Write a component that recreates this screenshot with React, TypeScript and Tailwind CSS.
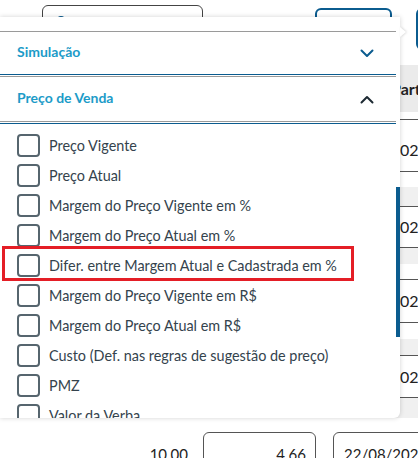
import React from 'react';

const items = [
  'Preço Vigente',
  'Preço Atual',
  'Margem do Preço Vigente em %',
  'Margem do Preço Atual em %',
  'Difer. entre Margem Atual e Cadastrada em %',
  'Margem do Preço Vigente em R$',
  'Margem do Preço Atual em R$',
  'Custo (Def. nas regras de sugestão de preço)',
  'PMZ',
  'Valor da Verba',
];

const ChevronDown = () => (
  <svg width="14" height="9" viewBox="0 0 14 9" fill="none">
    <path d="M1.5 1.5 L7 7 L12.5 1.5" stroke="#0b5c8f" strokeWidth="2" strokeLinecap="round" strokeLinejoin="round" />
  </svg>
);

const ChevronUp = () => (
  <svg width="14" height="9" viewBox="0 0 14 9" fill="none">
    <path d="M1.5 7.5 L7 2 L12.5 7.5" stroke="#1d2a33" strokeWidth="2" strokeLinecap="round" strokeLinejoin="round" />
  </svg>
);

const DateCell = ({ h, text }: { h: string; text: string }) => (
  <div className={`${h} flex items-center border-b border-[#555] pl-[400px] text-[16px] text-[#222] whitespace-nowrap`}>{text}</div>
);

export default function App() {
  return (
    <div className="relative w-[418px] h-[458px] overflow-hidden bg-white font-['Lato','Noto_Sans',sans-serif]">
      {/* --- BACKGROUND PAGE --- */}
      <div className="flex flex-col">
        <div className="h-[65px] flex items-start">
          <div className="shrink-0 ml-[42px] mt-[5px] w-[161px] h-[48px] border border-[#444] rounded-md pl-[14px] pt-[10px]">
            <div className="w-[8px] h-[8px] rounded-full bg-[#0b5c8f]" />
          </div>
          <div className="shrink-0 ml-[112px] mt-[8px] w-[77px] h-[44px] border-2 border-[#0b5c8f] rounded-md" />
          <div className="shrink-0 ml-[24px] mt-[8px] w-[30px] h-[42px] border-2 border-[#0b5c8f] rounded-md" />
        </div>
        <div className="h-[47px] bg-[#ebebeb] flex items-center pl-[391px] text-[16px] font-bold text-[#222] whitespace-nowrap">Partida</div>
        <div className="h-[8px] border-b border-[#555]" />
        <DateCell h="h-[52px] pt-[8px]" text="02/09/2022" />
        <div className="h-[35px] flex flex-col border-b border-[#555]">
          <div className="h-[15px]" />
          <div className="flex-1 bg-[#f0f0f0]" />
        </div>
        <DateCell h="h-[41px]" text="02/09/2022" />
        <div className="h-[32px] flex flex-col border-b border-[#555]">
          <div className="h-[16px] bg-[#f0f0f0]" />
          <div className="flex-1" />
        </div>
        <DateCell h="h-[43px]" text="02/09/2022" />
        <div className="h-[33px] flex flex-col border-b border-[#555]">
          <div className="h-[16px]" />
          <div className="flex-1 bg-[#f0f0f0]" />
        </div>
        <DateCell h="h-[42px]" text="02/09/2022" />
        <div className="h-[20px] bg-[#f0f0f0]" />
        <div className="absolute left-0 top-[432px] flex items-start">
          <div className="w-[188px] pt-[11px] text-right text-[15px] text-[#222]">10.00</div>
          <div className="ml-[15px] w-[113px] h-[40px] border border-[#555] rounded-md pt-[10px] pr-[9px] text-right text-[15px] text-[#222]">4.66</div>
          <div className="ml-[17px] w-[100px] h-[40px] border border-[#555] rounded-md pt-[10px] pl-[10px] text-[15px] text-[#222] whitespace-nowrap">22/08/2022</div>
        </div>
      </div>

      {/* --- POPUP --- */}
      <div className="absolute left-0 top-[17px] w-[400px] h-[401px] bg-white rounded-br-md shadow-[0_0_5px_rgba(0,0,0,0.18)] flex">
        <div className="absolute left-[400px] top-[10px] w-0 h-0 border-y-[5px] border-y-transparent border-l-[6px] border-l-white drop-shadow-[1px_0_1px_rgba(0,0,0,0.15)]" />
        <div className="w-[396px] flex flex-col overflow-hidden">
          <div className="h-[15px] border-b border-[#9a9a9a] shrink-0" />
          <div className="h-[43px] shrink-0 flex items-center justify-between pl-[17px] pr-[22px] border-b border-[#0b5c8f]">
            <span className="text-[14px] font-bold text-[#1c9bc8] -mt-[4px]">Simulação</span>
            <ChevronDown />
          </div>
          <div className="h-[1px] shrink-0" />
          <div className="h-[46px] shrink-0 flex items-center justify-between pl-[17px] pr-[22px] border-y border-[#9a9a9a]">
            <span className="text-[14px] font-bold text-[#1c9bc8] -mt-[4px]">Preço de Venda</span>
            <ChevronUp />
          </div>
          <div className="h-[1px] shrink-0" />
          <div className="border-t border-[#0b5c8f] pt-[6px] flex flex-col">
            {items.map((label, i) => (
              <div
                key={label}
                className={
                  i === 4
                    ? 'relative h-[30px] shrink-0 flex items-center pl-[17px]'
                    : 'h-[30px] shrink-0 flex items-center pl-[17px]'
                }
              >
                {i === 4 && (
                  <div className="absolute left-[2px] top-[-4px] w-[352px] h-[35px] border-[3px] border-[#e41e26]" />
                )}
                <div className="w-[23px] h-[23px] shrink-0 border-2 border-[#56656e] rounded-[4px]" />
                <span className="ml-[9px] pt-[2px] text-[14.4px] text-[#34434d] whitespace-nowrap">{label}</span>
              </div>
            ))}
          </div>
        </div>
        <div className="w-[4px] flex flex-col">
          <div className="mt-[170px] h-[150px] bg-[#0b5c8f]" />
        </div>
      </div>
    </div>
  );
}
